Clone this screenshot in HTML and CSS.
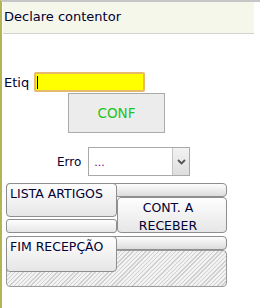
FILE: index.html
```html
<!DOCTYPE html>
<html lang="pt">
  <head>
    <meta charset="UTF-8" />
    <title>Declare contentor</title>
    <link rel="stylesheet" href="styles.css">
  </head>
  <body>
    <div class="page">
      <div class="title">Declare contentor</div>

      <div class="etiq-row">
        <span class="label">Etiq</span>
        <div class="field"><span class="caret"></span></div>
      </div>
      <a href="#" class="conf">CONF</a>

      <div class="erro-row">
        <span class="label">Erro</span>
        <div class="select">
          <span class="value">...</span>
          <span class="arrow">
            <svg width="9" height="6" viewBox="0 0 9 6"><path d="M1 1 L4.5 4.5 L8 1" fill="none" stroke="#555" stroke-width="1.8"/></svg>
          </span>
        </div>
      </div>

      <div class="group one">
        <div class="piece bar"></div>
        <a href="#" class="piece side">CONT. A RECEBER</a>
        <div class="piece strip"></div>
        <a href="#" class="piece main">LISTA ARTIGOS</a>
      </div>

      <div class="group two">
        <div class="piece bar"></div>
        <div class="piece hatch"></div>
        <a href="#" class="piece main">FIM RECEPÇÃO</a>
      </div>
    </div>
  </body>
</html>
```
FILE: styles.css
```css
* {
  margin: 0;
  padding: 0;
  box-sizing: border-box;
}
body {
  width: 260px;
  height: 308px;
  overflow: hidden;
  background: #fff;
  font-family: "DejaVu Sans", Verdana, sans-serif;
  color: #000033;
}
.page {
  height: 308px;
  border-top: 2px solid #c6c6c6;
  border-left: 2px solid #b4b452;
}
.title {
  margin-left: 1px;
  width: 251px;
  height: 32px;
  padding: 5px 0 0 1px;
  font-size: 13px;
  line-height: 17px;
  background: #f4f7e9;
  border-top: 1px solid #f4f7e9;
  border-bottom: 1px solid #d2d2d2;
}
.etiq-row {
  display: flex;
  align-items: center;
  gap: 5px;
  margin: 38px 0 0 2px;
  height: 20px;
}
.label {
  font-size: 13px;
}
.field {
  width: 111px;
  height: 20px;
  background: #ffff00;
  border: 2px solid #e6b96c;
  border-radius: 2px;
  padding: 2px 0 0 1px;
}
.caret {
  display: block;
  width: 1px;
  height: 13px;
  background: #000;
}
.conf {
  display: flex;
  align-items: center;
  justify-content: center;
  margin: 1px 0 0 66px;
  width: 97px;
  height: 40px;
  background: #ececec;
  border: 1px solid #ababab;
  color: #22c422;
  font-size: 13.5px;
  text-decoration: none;
}
.erro-row {
  display: flex;
  align-items: center;
  gap: 7px;
  margin: 14px 0 0 55px;
  height: 29px;
}
.erro-row .label {
  font-size: 12px;
}
.select {
  display: flex;
  width: 102px;
  height: 29px;
  border: 1px solid #a9a9a9;
  background: #fff;
}
.value {
  flex: 1;
  padding: 8px 0 0 5px;
  font-size: 11px;
  color: #800080;
}
.arrow {
  display: flex;
  align-items: center;
  justify-content: center;
  width: 17px;
  background: linear-gradient(#f2f2f2, #dedede);
  border-left: 1px solid #c4c4c4;
}
.group {
  display: grid;
  grid-template-columns: 111px 110px;
  margin-left: 4px;
  width: 221px;
}
.group.one {
  grid-template-rows: 14px 20px 16px;
  margin-top: 7px;
}
.group.two {
  grid-template-rows: 14px 22px 15px;
  margin-top: 3px;
}
.piece {
  border: 1px solid #8e8e8e;
  border-radius: 4px;
  background: linear-gradient(#fefefe, #e6e6e6);
  color: #000033;
  font-size: 12.5px;
  text-decoration: none;
}
.bar {
  grid-column: 1 / 3;
  grid-row: 1;
  background: linear-gradient(#fdfdfd, #dcdcdc);
}
.main {
  grid-column: 1;
  grid-row: 1 / 3;
  z-index: 2;
  padding: 2px 0 0 3px;
  line-height: 16px;
}
.side {
  grid-column: 2;
  grid-row: 2 / 4;
  z-index: 1;
  padding: 1px 18px 0 10px;
  line-height: 18px;
  text-align: center;
}
.strip {
  grid-column: 1;
  grid-row: 3;
  margin-top: 2px;
  border-radius: 3px;
}
.hatch {
  grid-column: 1 / 3;
  grid-row: 2 / 4;
  z-index: 1;
  border-color: #9a9a9a;
  background: repeating-linear-gradient(135deg, #f2f2f2 0 2px, #cfcfcf 2px 3px);
}
```
